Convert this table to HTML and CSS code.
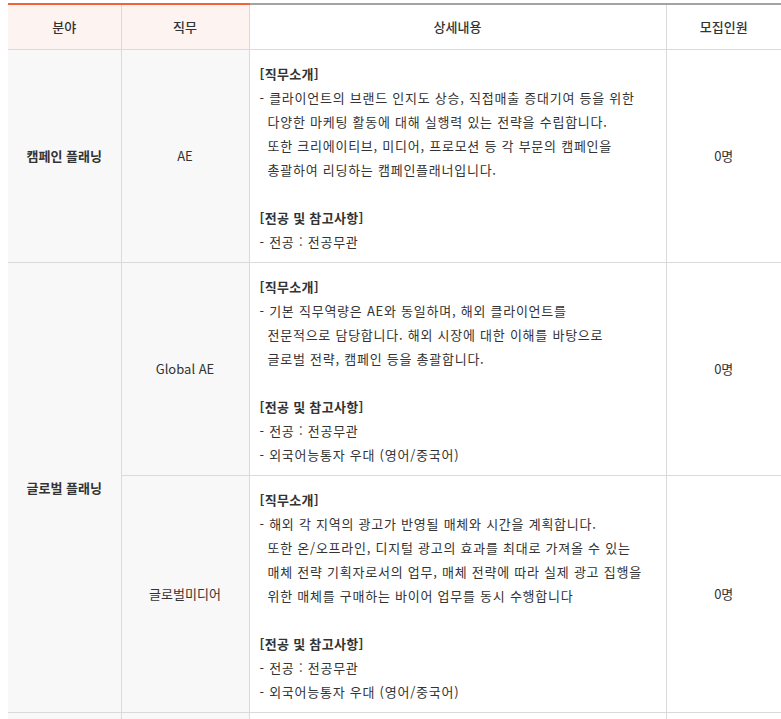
FILE: index.html
```html
<!DOCTYPE html>
<html lang="ko">
<head>
<meta charset="utf-8">
<title>모집분야</title>
<link rel="stylesheet" href="styles.css">
</head>
<body>
<div class="wrap">
<table class="recruit">
  <colgroup>
    <col class="c-field">
    <col class="c-job">
    <col class="c-detail">
    <col class="c-count">
  </colgroup>
  <thead>
    <tr>
      <th class="hl">분야</th>
      <th class="hl">직무</th>
      <th>상세내용</th>
      <th class="last">모집인원</th>
    </tr>
  </thead>
  <tbody>
    <tr>
      <td class="field">캠페인 플래닝</td>
      <td class="job">AE</td>
      <td class="detail">
        <p class="tit">[직무소개]</p>
        <p>- 클라이언트의 브랜드 인지도 상승, 직접매출 증대기여 등을 위한</p>
        <p class="cont">다양한 마케팅 활동에 대해 실행력 있는 전략을 수립합니다.</p>
        <p class="cont">또한 크리에이티브, 미디어, 프로모션 등 각 부문의 캠페인을</p>
        <p class="cont">총괄하여 리딩하는 캠페인플래너입니다.</p>
        <p class="blank"></p>
        <p class="tit">[전공 및 참고사항]</p>
        <p>- 전공 : 전공무관</p>
      </td>
      <td class="count last">0명</td>
    </tr>
    <tr>
      <td class="field" rowspan="2">글로벌 플래닝</td>
      <td class="job">Global AE</td>
      <td class="detail">
        <p class="tit">[직무소개]</p>
        <p>- 기본 직무역량은 AE와 동일하며, 해외 클라이언트를</p>
        <p class="cont">전문적으로 담당합니다. 해외 시장에 대한 이해를 바탕으로</p>
        <p class="cont">글로벌 전략, 캠페인 등을 총괄합니다.</p>
        <p class="blank"></p>
        <p class="tit">[전공 및 참고사항]</p>
        <p>- 전공 : 전공무관</p>
        <p>- 외국어능통자 우대 (영어/중국어)</p>
      </td>
      <td class="count last">0명</td>
    </tr>
    <tr>
      <td class="job">글로벌미디어</td>
      <td class="detail">
        <p class="tit">[직무소개]</p>
        <p>- 해외 각 지역의 광고가 반영될 매체와 시간을 계획합니다.</p>
        <p class="cont">또한 온/오프라인, 디지털 광고의 효과를 최대로 가져올 수 있는</p>
        <p class="cont">매체 전략 기획자로서의 업무, 매체 전략에 따라 실제 광고 집행을</p>
        <p class="cont">위한 매체를 구매하는 바이어 업무를 동시 수행합니다</p>
        <p class="blank"></p>
        <p class="tit">[전공 및 참고사항]</p>
        <p>- 전공 : 전공무관</p>
        <p>- 외국어능통자 우대 (영어/중국어)</p>
      </td>
      <td class="count last">0명</td>
    </tr>
    <tr>
      <td class="field">&nbsp;</td>
      <td class="job">&nbsp;</td>
      <td class="detail"><p>&nbsp;</p></td>
      <td class="count last">&nbsp;</td>
    </tr>
  </tbody>
</table>
</div>
</body>
</html>
```

FILE: styles.css
```css
html, body {
  margin: 0;
  padding: 0;
  background: #fff;
  overflow: hidden;
}
.wrap {
  padding: 3px 0 0 8px;
}
.recruit {
  border-collapse: collapse;
  table-layout: fixed;
  width: 773px;
  font-family: "Noto Sans CJK KR", "Noto Sans", sans-serif;
  font-size: 13px;
  color: #333;
  line-height: 24px;
}
.c-field { width: 113px; }
.c-job { width: 128px; }
.c-detail { width: 417px; }
.c-count { width: 115px; }

.recruit th {
  font-weight: 500;
  height: 44px;
  padding: 0;
  text-align: center;
  border-top: 2px solid #a3a3a3;
  border-bottom: 1px solid #dadada;
  border-right: 1px solid #dadada;
  background: #fff;
}
.recruit th.hl {
  border-top-color: #f4623a;
  background: #fdf4f1;
}
.recruit th.last,
.recruit td.last {
  border-right: 0;
}
.recruit td {
  border-bottom: 1px solid #dadada;
  border-right: 1px solid #dadada;
  text-align: center;
  vertical-align: middle;
  padding: 0;
}
.recruit td.field {
  background: #f8f8f8;
  font-weight: 700;
}
.recruit td.job {
  background: #f8f8f8;
}
.recruit td.detail {
  text-align: left;
  padding: 12px 10px 8px 10px;
}
.detail p {
  margin: 0;
  height: 24px;
  white-space: nowrap;
  letter-spacing: 0.75px;
}
.detail p.tit {
  font-weight: 700;
  letter-spacing: 0.3px;
}
.detail p.cont {
  padding-left: 8px;
}
```
